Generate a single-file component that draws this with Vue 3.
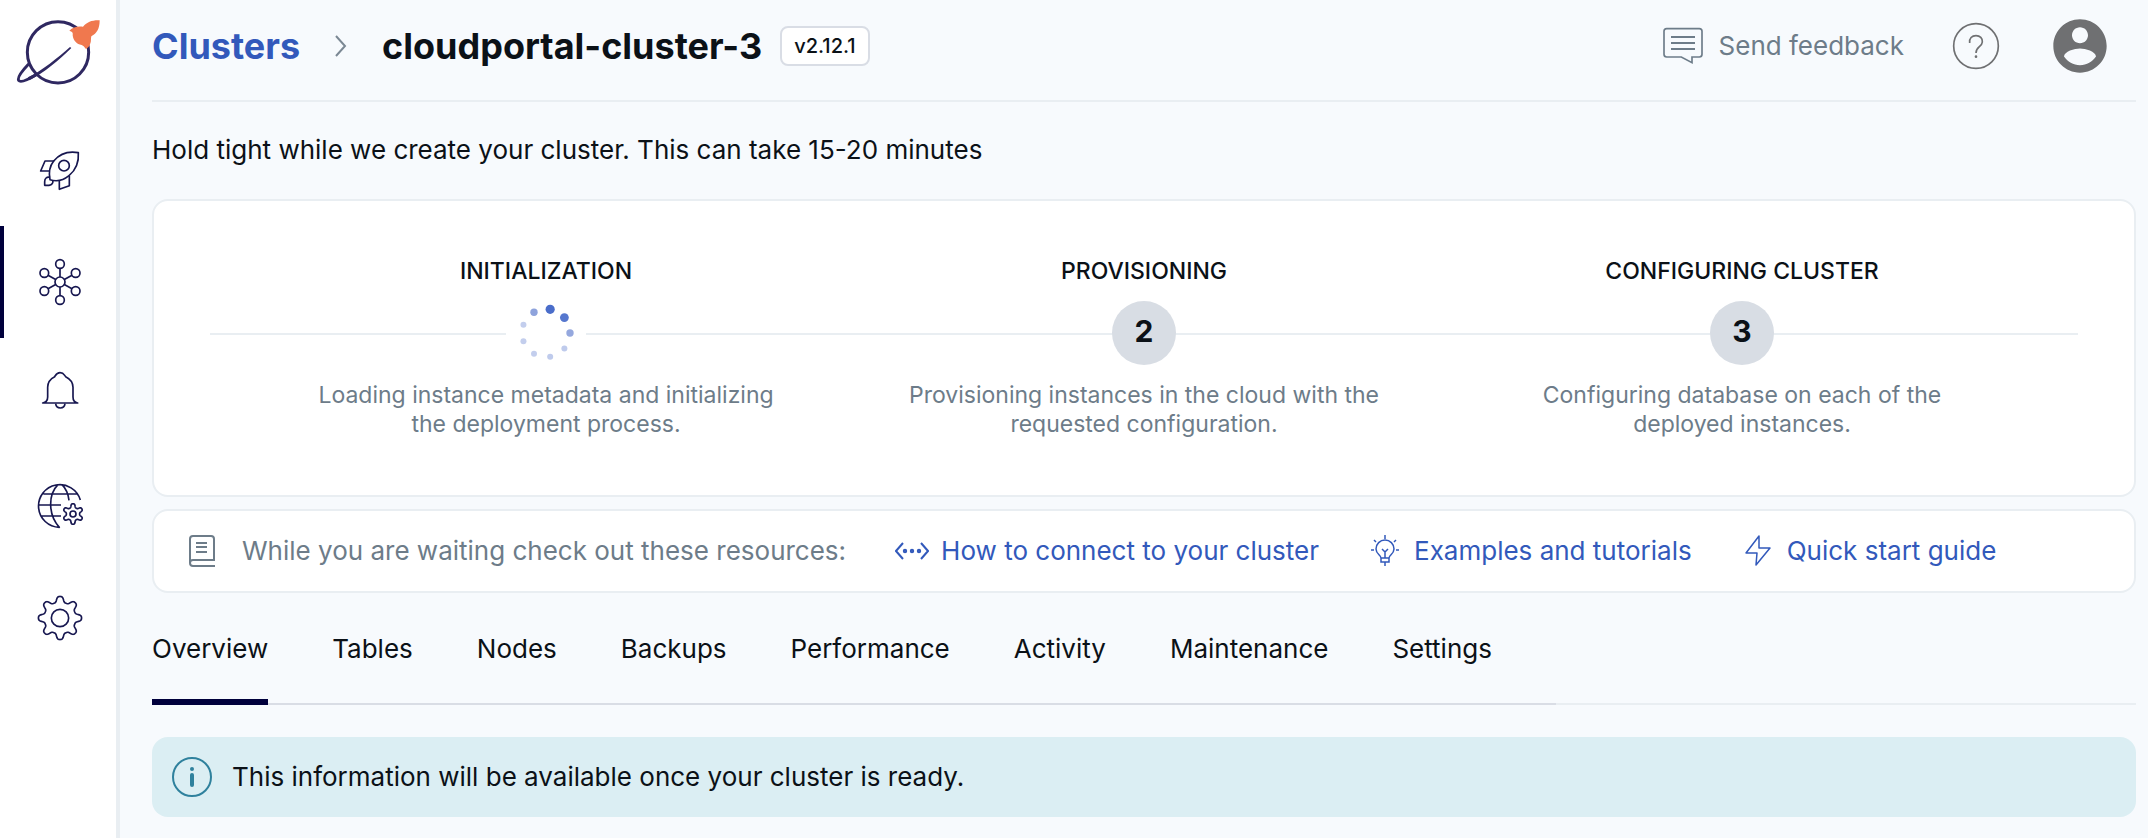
<script setup>
import { ref } from 'vue'

const steps = [
  { title: 'INITIALIZATION', number: null, text: 'Loading instance metadata and initializing the deployment process.' },
  { title: 'PROVISIONING', number: 2, text: 'Provisioning instances in the cloud with the requested configuration.' },
  { title: 'CONFIGURING CLUSTER', number: 3, text: 'Configuring database on each of the deployed instances.' }
]

const tabs = ['Overview', 'Tables', 'Nodes', 'Backups', 'Performance', 'Activity', 'Maintenance', 'Settings']
const activeTab = ref('Overview')

const dotSizes = [4.6, 4.4, 3.7, 3, 3, 3, 3, 3, 3.7]
const dotColors = ['#4a6dca', '#5677ce', '#95a8de', '#bfcbec', '#bfcbec', '#c3ceed', '#c3ceed', '#c3ceed', '#8ea3dc']
const dots = dotSizes.map((r, i) => {
  const a = ((i * 40 - 80) * Math.PI) / 180
  return { x: 40 + 24 * Math.cos(a), y: 32 + 24 * Math.sin(a), r, fill: dotColors[i] }
})

// Closed outline of a cog with rounded teeth, the first one pointing up.
function cog(cx, cy, teeth, outer, inner) {
  const points = []
  for (let i = 0; i < 240; i++) {
    const a = (i / 240) * Math.PI * 2
    const wave = Math.tanh(1.6 * Math.cos(teeth * a) - 0.2) / Math.tanh(1.6)
    const r = (outer + inner) / 2 + ((outer - inner) / 2) * wave
    points.push(`${(cx + r * Math.sin(a)).toFixed(1)} ${(cy - r * Math.cos(a)).toFixed(1)}`)
  }
  return `M${points.join('L')}Z`
}
const largeCog = cog(180, 474, 8, 65, 48)
const smallCog = cog(219, 162, 6, 31, 20)
</script>

<template>
  <div class="app">
    <aside class="sidebar">
      <a class="logo" href="#" aria-label="Home">
        <svg width="85" height="67" viewBox="48 57 255 201" fill="none" stroke="#2f2861">
          <circle cx="174" cy="157" r="92" stroke-width="9" />
          <path d="M86 192C66 213 51 232 56 241C62 249 82 240 108 224" stroke-width="9" />
          <path d="M84 232C128 211 172 174 210 141L214 144C178 180 132 218 88 241Z" fill="#2f2861" stroke="none" />
          <path d="M299 61C276 60 262 66 249 80C234 78 219 80 208 92C216 94 220 98 218 106C220 122 230 133 245 135C251 137 253 142 258 147C266 143 269 138 271 130C274 124 272 116 274 109C291 100 299 86 299 61Z" fill="#f0784e" stroke="none" />
        </svg>
      </a>
      <nav class="side-nav" aria-label="Main">
        <a href="#" class="side-item" aria-label="Getting started">
          <svg width="48" height="48" viewBox="108 438 144 144">
            <path d="M235 458C201 452 176 465 161 483C147 501 146 520 150 539C168 545 190 541 207 527C230 508 237 485 235 458Z" />
            <circle cx="192" cy="497" r="16" />
            <path d="M163 483H135L122 513H148M178 542V568L208 557V528M150 532C140 529 134 536 134 545V556H147C156 555 161 548 158 541" />
          </svg>
        </a>
        <a href="#" class="side-item active" aria-label="Clusters" aria-current="page">
          <svg width="48" height="48" viewBox="108 114 144 144">
            <circle cx="180" cy="186" r="15" />
            <circle cx="180" cy="132" r="13" /><circle cx="180" cy="240" r="13" />
            <circle cx="227" cy="159" r="13" /><circle cx="227" cy="213" r="13" />
            <circle cx="133" cy="159" r="13" /><circle cx="133" cy="213" r="13" />
            <path d="M180 145V171M180 201V227M193 178.500L216 165.500M193 193.500L216 206.500M167 178.500L144 165.500M167 193.500L144 206.500" />
          </svg>
        </a>
        <a href="#" class="side-item" aria-label="Alerts">
          <svg width="48" height="48" viewBox="108 450 144 144">
            <path d="M128 549C139 547 143 541 143 531V502C143 486 152 476 164 470C168 464 170 458 180 458C191 458 192 464 197 470C209 476 219 486 219 502V531C219 541 222 547 233 549Z" />
            <path d="M167 551C168 560 174 564 181 564C188 564 194 560 195 551" />
          </svg>
        </a>
        <a href="#" class="side-item" aria-label="Network access">
          <svg width="48" height="48" viewBox="108 66 144 144">
            <path d="M241 120A64 64 0 1 0 178 202C144 164 144 104 174 74M186 74C198 86 205 103 207 121M130 102H232M117 135H183M123 168H183" />
            <path :d="smallCog" /><circle cx="219" cy="162" r="9" />
          </svg>
        </a>
        <a href="#" class="side-item" aria-label="Admin">
          <svg width="48" height="48" viewBox="108 402 144 144">
            <path :d="largeCog" /><circle cx="180" cy="474" r="26" />
          </svg>
        </a>
      </nav>
    </aside>

    <main class="content">
      <header class="header">
        <nav class="crumbs" aria-label="Breadcrumb">
          <a href="#">Clusters</a>
          <svg width="12" height="22" viewBox="0 0 12 22" fill="none" stroke="#7b8894" stroke-width="2"><path d="M1 1L10 11L1 21" /></svg>
          <h1>cloudportal-cluster-3</h1>
        </nav>
        <span class="version">v2.12.1</span>
        <div class="actions">
          <button class="feedback" type="button">
            <svg width="40" height="38" viewBox="69 81 120 114" fill="none" stroke="currentColor" stroke-width="5">
              <path d="M80 86H178Q186 86 186 94V163Q186 171 178 171H156V188L124 171H80Q72 171 72 163V94Q72 86 80 86Z" />
              <path d="M93 111H165M93 129H165M93 147H165" stroke-width="6" />
            </svg>
            Send feedback
          </button>
          <button class="icon-button" type="button" aria-label="Help">
            <svg width="48" height="48" viewBox="936 66 144 144" fill="none" stroke="#6f7072" stroke-width="5">
              <circle cx="1008" cy="138" r="67" />
              <path d="M989 129C987 114 996 107 1008 107C1020 107 1028 115 1027 126C1026 141 1008 140 1008 159" />
              <circle cx="1008" cy="170" r="4" fill="#6f7072" stroke="none" />
            </svg>
          </button>
          <button class="icon-button" type="button" aria-label="Account">
            <svg width="64" height="64" viewBox="0 0 24 24" fill="#6f7072">
              <path d="M12 2C6.480 2 2 6.480 2 12s4.480 10 10 10 10-4.480 10-10S17.520 2 12 2zm0 3c1.660 0 3 1.340 3 3s-1.340 3-3 3-3-1.340-3-3 1.340-3 3-3zm0 14.200c-2.500 0-4.710-1.280-6-3.220.030-1.990 4-3.080 6-3.080 1.990 0 5.970 1.090 6 3.080-1.290 1.940-3.500 3.220-6 3.220z" />
            </svg>
          </button>
        </div>
      </header>

      <p class="notice">Hold tight while we create your cluster. This can take 15-20 minutes</p>

      <section class="card progress">
        <ol class="steps">
          <li v-for="step in steps" :key="step.title" class="step">
            <h2>{{ step.title }}</h2>
            <span v-if="step.number" class="marker">{{ step.number }}</span>
            <svg v-else class="spinner" width="80" height="64" viewBox="0 0 80 64" role="img" aria-label="In progress">
              <circle v-for="(dot, i) in dots" :key="i" :cx="dot.x" :cy="dot.y" :r="dot.r" :fill="dot.fill" />
            </svg>
            <p>{{ step.text }}</p>
          </li>
        </ol>
      </section>

      <section class="card resources">
        <span class="resource-label">
          <svg width="28" height="34" viewBox="0 0 28 34" fill="none" stroke="currentColor" stroke-width="2">
            <path d="M27 32H5Q2 32 2 29V5Q2 2 5 2H23Q26 2 26 5V26H5Q2 26 2 29M8 9H19M8 13H19M8 18H19" />
          </svg>
          While you are waiting check out these resources:
        </span>
        <a href="#">
          <svg width="34" height="34" viewBox="0 0 34 34" fill="none" stroke="currentColor" stroke-width="2">
            <path d="M8 9L1 17L8 25M26 9L33 17L26 25" />
            <circle cx="10" cy="17" r="1.200" /><circle cx="17" cy="17" r="1.200" /><circle cx="24" cy="17" r="1.200" />
          </svg>
          How to connect to your cluster
        </a>
        <a href="#">
          <svg width="34" height="34" viewBox="0 0 34 34" fill="none" stroke="currentColor" stroke-width="1.500">
            <path d="M13 24C13 21 8 20 8 15A9 9 0 0 1 26 15C26 20 21 21 21 24ZM13 24V28H21V24M17 28V32M17 24V18M14 15L17 18L20 15M17 1V5M3 16H6M28 16H31M6 6L8 8M28 6L26 8" />
          </svg>
          Examples and tutorials
        </a>
        <a href="#">
          <svg width="34" height="34" viewBox="0 0 34 34" fill="none" stroke="currentColor" stroke-width="1.500" stroke-linejoin="round">
            <path d="M18 2L5 19H16L15 31L29 14H18Z" />
          </svg>
          Quick start guide
        </a>
      </section>

      <div class="tab-bar">
        <div class="tabs" role="tablist">
          <button
            v-for="tab in tabs" :key="tab" type="button" role="tab" class="tab"
            :class="{ selected: tab === activeTab }" :aria-selected="tab === activeTab" @click="activeTab = tab"
          >{{ tab }}</button>
        </div>
      </div>

      <div class="info" role="status">
        <svg width="40" height="40" viewBox="0 0 40 40" fill="none" stroke="#2f819d" stroke-width="2">
          <circle cx="20" cy="20" r="19" />
          <circle cx="20" cy="12" r="2" fill="#2f819d" stroke="none" />
          <path d="M20 18V28" stroke-width="4" stroke-linecap="round" />
        </svg>
        This information will be available once your cluster is ready.
      </div>
    </main>
  </div>
</template>

<style>
body { background: #f7fafd; }
</style>

<style scoped>
* { box-sizing: border-box; }
.app {
  display: flex;
  min-height: 100vh;
  font-family: Inter, "Liberation Sans", sans-serif;
  font-size: 26px;
  line-height: 32px;
  color: #0b1117;
  background: #f7fafd;
}
svg { display: block; flex: none; }
a { color: #3259bb; text-decoration: none; }
button { font: inherit; color: inherit; background: none; border: 0; padding: 0; cursor: pointer; }
h1, h2, p, ol { margin: 0; padding: 0; }

.sidebar { flex: none; width: 120px; background: #fff; border-right: 4px solid #e9eef2; }
.logo { display: flex; justify-content: center; height: 114px; padding-top: 19px; }
.side-item { display: flex; align-items: center; justify-content: center; height: 112px; padding-left: 4px; }
.side-item.active { padding-left: 0; border-left: 4px solid #00003c; }
.side-item svg { fill: none; stroke: #171750; stroke-width: 5; stroke-linejoin: round; }

.content { flex: 1; min-width: 0; padding: 0 12px 20px 32px; }
.header { display: flex; align-items: center; height: 102px; padding: 0 24px 8px 0; border-bottom: 2px solid #e9eef2; }
.crumbs { display: flex; align-items: center; gap: 35px; font-size: 36px; line-height: 44px; font-weight: 700; }
.crumbs h1 { font: inherit; }
.version {
  margin-left: 18px;
  padding: 4px 12px;
  font-size: 20px;
  line-height: 28px;
  font-weight: 500;
  background: #fff;
  border: 2px solid #d9dde5;
  border-radius: 8px;
}
.actions { display: flex; align-items: center; gap: 48px; margin-left: auto; }
.feedback { display: flex; align-items: center; gap: 16px; color: #6d7c89; }

.notice { padding: 32px 0 33px; }
.card { background: #fff; border: 2px solid #e9eef2; border-radius: 16px; }
.progress { padding: 56px; }
.steps { position: relative; display: grid; grid-template-columns: repeat(3, 1fr); padding: 0 37px; list-style: none; }
.steps::before { content: ""; position: absolute; left: 0; right: 0; top: 76px; height: 2px; background: #e9eef2; }
.step { position: relative; display: flex; flex-direction: column; align-items: center; text-align: center; }
.step h2 { font-size: 23px; line-height: 28px; font-weight: 500; }
.marker, .spinner { margin: 16px 0; height: 64px; }
.spinner { background: #fff; }
.marker { width: 64px; border-radius: 50%; background: #d8dde4; font-size: 30px; line-height: 60px; font-weight: 700; }
.step p { width: 480px; max-width: 100%; color: #6d7c89; font-size: 23px; line-height: 29px; }

.resources { display: flex; align-items: center; gap: 49px; margin-top: 12px; padding: 23px 34px; }
.resources a, .resource-label { display: flex; align-items: center; gap: 12px; }
.resource-label { gap: 26px; color: #6d7c89; }

.tab-bar { display: flex; margin-top: 24px; box-shadow: inset 0 -2px #e9eef2; }
.tabs { display: flex; gap: 64px; padding-right: 64px; box-shadow: inset 0 -2px #d9dde5; }
.tab { height: 88px; padding: 12px 0 30px; border-bottom: 6px solid transparent; line-height: 40px; }
.tab.selected { border-bottom-color: #00003c; }

.info { display: flex; align-items: center; gap: 20px; margin-top: 32px; padding: 20px; border-radius: 16px; background: #dbeef3; }
</style>
